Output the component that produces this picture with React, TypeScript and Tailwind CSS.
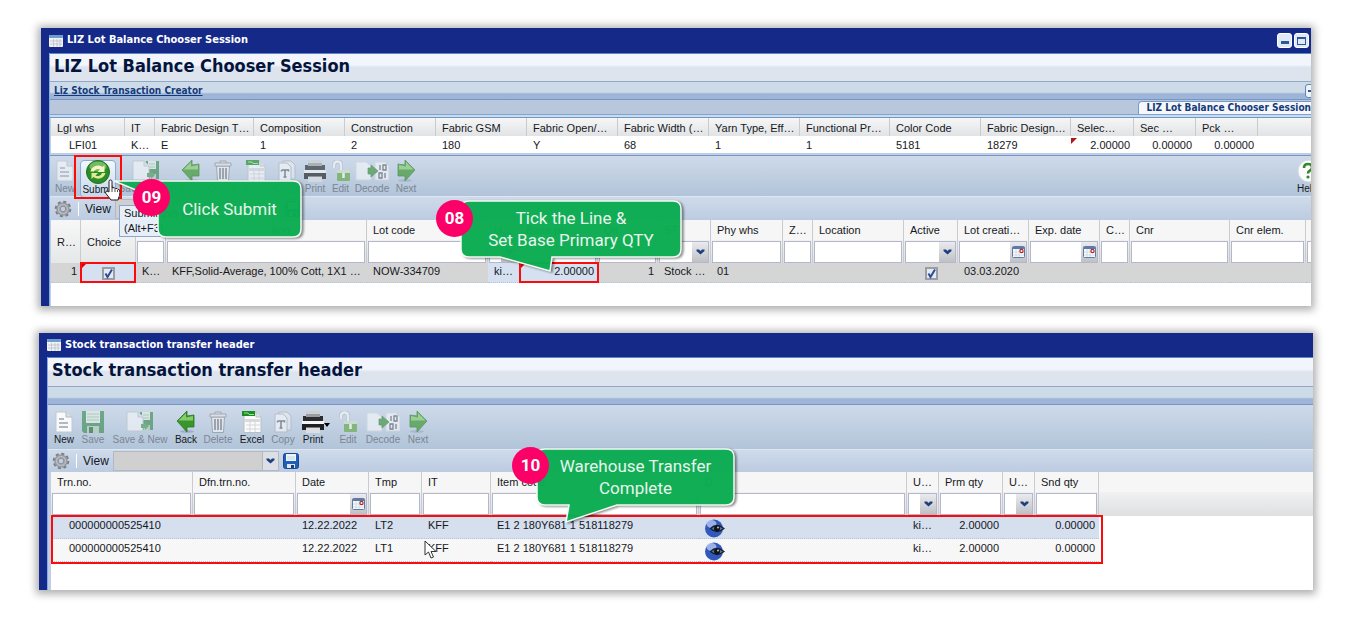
import React from "react";

type Column = {
  label: string;
  width?: string;
  filter?: "text" | "select" | "date" | "none";
  tall?: boolean;
};

const summaryColumns: Column[] = [
  { label: "Lgl whs", width: "w-[74px]" },
  { label: "IT", width: "w-[30px]" },
  { label: "Fabric Design T…", width: "w-[99px]" },
  { label: "Composition", width: "w-[91px]" },
  { label: "Construction", width: "w-[91px]" },
  { label: "Fabric GSM", width: "w-[91px]" },
  { label: "Fabric Open/…", width: "w-[91px]" },
  { label: "Fabric Width (…", width: "w-[91px]" },
  { label: "Yarn Type, Eff…", width: "w-[91px]" },
  { label: "Functional Pr…", width: "w-[90px]" },
  { label: "Color Code", width: "w-[91px]" },
  { label: "Fabric Design…", width: "w-[90px]" },
  { label: "Selec…", width: "w-[63px]" },
  { label: "Sec …", width: "w-[62px]" },
  { label: "Pck …", width: "w-[62px]" },
  { label: "" },
];

const summaryValues = ["LFI01", "K…", "E", "1", "2", "180", "Y", "68", "1", "1", "5181", "18279", "2.00000", "0.00000", "0.00000", ""];

const lotColumns: Column[] = [
  { label: "R…", width: "w-[30px]", tall: true },
  { label: "Choice", width: "w-[55px]", tall: true },
  { label: "IT", width: "w-[30px]", filter: "text" },
  { label: "Summarized description", width: "w-[201px]", filter: "text" },
  { label: "Lot code", width: "w-[121px]", filter: "text" },
  { label: "U…", width: "w-[32px]", filter: "select" },
  { label: "Base pri…", width: "w-[78px]", filter: "text" },
  { label: "Qlt", width: "w-[60px]", filter: "text" },
  { label: "ST", width: "w-[53px]", filter: "select" },
  { label: "Phy whs", width: "w-[72px]", filter: "text" },
  { label: "Z…", width: "w-[30px]", filter: "text" },
  { label: "Location", width: "w-[91px]", filter: "text" },
  { label: "Active", width: "w-[54px]", filter: "select" },
  { label: "Lot creati…", width: "w-[71px]", filter: "date" },
  { label: "Exp. date", width: "w-[71px]", filter: "date" },
  { label: "C…", width: "w-[30px]", filter: "text" },
  { label: "Cnr", width: "w-[100px]", filter: "text" },
  { label: "Cnr elem.", width: "w-[76px]", filter: "text" },
  { label: "", filter: "text" },
];

const transferColumns: Column[] = [
  { label: "Trn.no.", width: "w-[142px]", filter: "text" },
  { label: "Dfn.trn.no.", width: "w-[103px]", filter: "text" },
  { label: "Date", width: "w-[73px]", filter: "date" },
  { label: "Tmp", width: "w-[53px]", filter: "text" },
  { label: "IT", width: "w-[69px]", filter: "text" },
  { label: "Item code", width: "w-[208px]", filter: "text" },
  { label: "D", width: "w-[208px]", filter: "text" },
  { label: "U…", width: "w-[32px]", filter: "select" },
  { label: "Prm qty", width: "w-[64px]", filter: "text" },
  { label: "U…", width: "w-[32px]", filter: "select" },
  { label: "Snd qty", width: "w-[64px]", filter: "text" },
  { label: "", filter: "none" },
];

const transferRows = [
  { number: "000000000525410", date: "12.22.2022", template: "LT2", type: "KFF", item: "E1 2 180Y681 1 518118279", unit: "ki…", primary: "2.00000", secondary: "0.00000" },
  { number: "000000000525410", date: "12.22.2022", template: "LT1", type: "KFF", item: "E1 2 180Y681 1 518118279", unit: "ki…", primary: "2.00000", secondary: "0.00000" },
];

/* ---------- Icons ---------- */

const WindowIcon = () => (
  <svg width="14" height="12" viewBox="0 0 14 12" aria-hidden="true">
    <rect width="14" height="12" rx="1" fill="#f0f2f4" />
    <rect width="14" height="3" rx="1" fill="#6f9bd0" />
    <path d="M1 6h12M1 9h12M4.500 4v8M8 4v8M11 4v8" stroke="#b9c0ca" strokeWidth="0.800" />
  </svg>
);

const NewIcon = () => (
  <svg width="18" height="22" viewBox="0 0 18 22" aria-hidden="true">
    <path d="M1 1h10l6 5v15H1z" fill="#f8f9fa" stroke="#c2c8d0" />
    <path d="M11 1v5h6" fill="#d9dee5" stroke="#b4bcc6" />
    <path d="M4 8h5M4 12h9M4 16h9" stroke="#b3b8bf" strokeWidth="2" />
  </svg>
);

const SaveIcon = () => (
  <svg width="24" height="22" viewBox="0 0 24 22" aria-hidden="true">
    <path d="M1 0h22v22H3l-2-2z" fill="#3f8d57" />
    <path d="M5 0h14v12H5z" fill="#e3eee4" />
    <path d="M6 3h12M6 6h12M6 9h12" stroke="#9fc2a6" />
    <path d="M6 15h12v7H6z" fill="#b4cfba" />
    <path d="M8 16h4v6H8z" fill="#2b6d40" />
  </svg>
);

const SaveNewIcon = () => (
  <svg width="28" height="22" viewBox="0 0 28 22" aria-hidden="true">
    <path d="M14 1h13v18H14z" fill="#3f8d57" />
    <path d="M16 1h8v8h-8z" fill="#e3eee4" />
    <path d="M17 4h6M17 7h6" stroke="#9fc2a6" />
    <path d="M18 14h6v5h-6z" fill="#b4cfba" />
    <path d="M1 1h11l5 5v14H1z" fill="#f4f6f8" stroke="#bcc4ce" />
    <path d="M12 1v5h5" fill="#dde2e8" stroke="#bcc4ce" />
    <path d="M15 13h4v-2l4 4-4 4v-2h-4z" fill="#4f9d5a" />
  </svg>
);

const ArrowIcon = ({ flip = false }: { flip?: boolean }) => (
  <svg width="20" height="22" viewBox="0 0 20 22" className={flip ? "-scale-x-100" : ""} aria-hidden="true">
    <ellipse cx="11" cy="20.500" rx="7" ry="1.500" fill="#8fa2b5" opacity="0.700" />
    <path d="M1 10 11 0v5l7-1v12h-7v5z" fill="#38962a" stroke="#2a7522" strokeWidth="0.800" />
    <path d="M2.500 9.500 10 2v4.500L17 5v4.500z" fill="#86cb6c" />
  </svg>
);

const TrashIcon = () => (
  <svg width="18" height="22" viewBox="0 0 18 22" aria-hidden="true">
    <path d="M2.500 6h13l-1 15.500h-11z" fill="#f1f2f3" stroke="#8b9097" />
    <path d="M1 3h16v3H1zM6 3V1h6v2" fill="#e4e6e8" stroke="#8b9097" />
    <path d="M6 8v11M9 8v11M12 8v11" stroke="#6d737b" strokeWidth="1.600" />
  </svg>
);

const ExcelIcon = () => (
  <svg width="20" height="22" viewBox="0 0 20 22" aria-hidden="true">
    <path d="M2 1h12l5 5v15.500H2z" fill="#fbfbfb" stroke="#b9bec4" />
    <path d="M0 0h13v5H0z" fill="#1c8d25" />
    <path d="M2 2h4l1 1.500h5" stroke="#9ddc9c" fill="none" />
    <path d="M14 1v5h5" fill="#e4e7ea" stroke="#b9bec4" />
    <path d="M3 8h15v3H3z" fill="#d8dadd" />
    <path d="M4 14h14M4 18h14M8 8v13M13 8v13" stroke="#d3d6da" />
  </svg>
);

const CopyIcon = () => (
  <svg width="20" height="22" viewBox="0 0 20 22" aria-hidden="true">
    <path d="M6 1h8l4 4v14H6z" fill="#e8ebef" stroke="#aab2bc" />
    <path d="M2 3h8l4 4v14H2z" fill="#f7f8f9" stroke="#aab2bc" />
    <path d="M4.500 10h7v1.500M4.500 10v1.500M8 10v7M6.500 17h3" stroke="#5b626c" strokeWidth="1.500" fill="none" />
  </svg>
);

const PrintIcon = () => (
  <svg width="22" height="22" viewBox="0 0 22 22" aria-hidden="true">
    <path d="M4 0h14v5H4z" fill="#cdd0d3" />
    <path d="M1 5h20v5H1z" fill="#2b2d30" />
    <path d="M4 3h14v3H4z" fill="#9a9da1" />
    <path d="M0 10h22v3H0z" fill="#f4f5f6" />
    <path d="M0 13h22v6H0z" fill="#1d1f21" />
    <path d="M4 16h14v6H4z" fill="#dcdfe1" />
    <path d="M4 16.500h14" stroke="#777" />
  </svg>
);

const LockIcon = () => (
  <svg width="20" height="22" viewBox="0 0 20 22" aria-hidden="true">
    <path d="M3 8V5q0-3.500 3.500-3.500T10 5v6" fill="none" stroke="#a9b3be" strokeWidth="4" />
    <path d="M3 8V5q0-3.500 3.500-3.500T10 5v6" fill="none" stroke="#f3f5f7" strokeWidth="2.600" />
    <rect x="6" y="10" width="13" height="11" rx="1" fill="#65a848" />
    <rect x="6" y="10" width="13" height="3" fill="#cfe3c5" />
    <path d="M12.500 13v5" stroke="#f6fbf4" strokeWidth="2.500" />
  </svg>
);

const DecodeIcon = () => (
  <svg width="34" height="22" viewBox="0 0 34 22" aria-hidden="true">
    <path d="M1 2h10l5 4v14H1z" fill="#f4f6f8" stroke="#d2d8df" />
    <path d="M20 2h10l4 4v14H20z" fill="#f4f6f8" stroke="#d2d8df" />
    <path d="M13 8h3V5l7 6-7 6v-3h-3z" fill="#3f943d" stroke="#347a35" strokeWidth="0.700" />
    <path d="M25 5v5M28 5h3v5h-3zM24 13h3v5h-3zM30 13v5" stroke="#565d66" fill="none" strokeWidth="1.300" />
  </svg>
);

const SubmitIcon = () => (
  <svg width="24" height="24" viewBox="0 0 24 24" aria-hidden="true">
    <circle cx="12" cy="12" r="11.500" fill="#2c8c25" stroke="#247020" />
    <ellipse cx="12" cy="6.500" rx="8.500" ry="5" fill="#8fcf79" opacity="0.700" />
    <path d="M4.500 11.500a7.500 7.500 0 0 1 12-4.500l2-2v7h-7l2.500-2.500A4.500 4.500 0 0 0 8 11.500z" fill="#f7f3c4" />
    <path d="M19.500 13a7.500 7.500 0 0 1-12 4l-2 2v-6h6.500l-2.500 2.500a4.500 4.500 0 0 0 6.500-2.500z" fill="#dcea9a" />
  </svg>
);

const HelpIcon = () => (
  <svg width="24" height="24" viewBox="0 0 24 24" aria-hidden="true">
    <circle cx="12" cy="12" r="11" fill="#fafbfa" stroke="#d3dae2" />
    <path d="M7 9q0-4 4-4t4 3.500q0 2-2 3t-2 3" fill="none" stroke="#36862f" strokeWidth="2.600" />
    <circle cx="11" cy="18" r="1.600" fill="#36862f" />
  </svg>
);

const GearIcon = () => (
  <svg width="18" height="18" viewBox="0 0 18 18" aria-hidden="true">
    <circle cx="9" cy="9" r="7" fill="none" stroke="#797d82" strokeWidth="2.600" strokeDasharray="3 2.500" />
    <circle cx="9" cy="9" r="5" fill="none" stroke="#96999e" strokeWidth="3.600" />
    <circle cx="9" cy="9" r="4.500" fill="none" stroke="#b9bcc0" strokeWidth="1.500" />
    <circle cx="9" cy="9" r="2.800" fill="#c4cfde" stroke="#777b80" strokeWidth="0.800" />
  </svg>
);

const DiskIcon = () => (
  <svg width="16" height="16" viewBox="0 0 16 16" aria-hidden="true">
    <rect x="0.500" y="0.500" width="15" height="15" rx="2" fill="#1f5fb4" stroke="#174a91" />
    <path d="M3 1h10v7H3z" fill="#eef4fa" />
    <path d="M4 4h8M4 6h8" stroke="#b9cde4" strokeWidth="0.800" />
    <path d="M4 11h8v4H4z" fill="#dfe7f0" />
    <path d="M8 12h3v3H8z" fill="#1b427c" />
  </svg>
);

const Chevron = () => (
  <svg width="9" height="6" viewBox="0 0 9 6" aria-hidden="true">
    <path d="M0.500 0.500h2.500L4.500 2 6 0.500h2.500v1.500L4.500 5.500 0.500 2z" fill="#1d3f80" />
  </svg>
);

const CalendarIcon = () => (
  <svg width="13" height="12" viewBox="0 0 13 12" aria-hidden="true">
    <rect x="0.500" y="0.500" width="12" height="11" rx="1" fill="#f8fafc" stroke="#5d7ba4" />
    <path d="M0.500 1h12v2H0.500z" fill="#5d7ba4" />
    <path d="M1 6h11M1 9h11M4 3v8M7 3v8" stroke="#ccd6e2" strokeWidth="0.800" />
    <circle cx="9.500" cy="5" r="1.600" fill="#fff" stroke="#b32626" strokeWidth="1.200" />
  </svg>
);

const EyeIcon = () => (
  <svg width="20" height="19" viewBox="0 0 20 19" aria-hidden="true">
    <circle cx="9" cy="9.500" r="9" fill="#3158bd" />
    <ellipse cx="6.500" cy="5" rx="5" ry="4" fill="#b7c9f2" opacity="0.800" />
    <path d="M5.500 9.500q6-6 13.500 0-7 6-13.500 0z" fill="#5f718f" stroke="#16202f" strokeWidth="1.200" />
    <circle cx="12" cy="9.500" r="3" fill="#10151e" />
    <circle cx="13" cy="8.500" r="0.900" fill="#c7d5e6" />
  </svg>
);

const ArrowCursor = () => (
  <svg width="13" height="19" viewBox="0 0 13 19" aria-hidden="true">
    <path d="M1 1v14l3.500-3 2.500 6 2.500-1-2.500-5.500H12z" fill="#fff" stroke="#333" />
  </svg>
);

const HandCursor = () => (
  <svg width="17" height="22" viewBox="0 0 17 22" aria-hidden="true">
    <path d="M5 13V2.500a1.500 1.500 0 0 1 3 0V9l1-.5 1.500.5 1 .5 1.500 0 .8.800 1.700.5q.8 3 0 5.500L14 21H7l-5.500-7q0-2 1.500-2z" fill="#fff" stroke="#222" />
    <path d="M8 9v4M11 10v3M13.500 11v2" stroke="#222" strokeWidth="0.800" />
  </svg>
);

/* ---------- Toolbar ---------- */

type Tool = { label: string; icon: React.ReactNode; width: string; enabled?: boolean; menu?: boolean };

const lotTools: Tool[] = [
  { label: "New", icon: <NewIcon />, width: "w-[30px]" },
  { label: "Submit", icon: <SubmitIcon />, width: "w-[36px]", enabled: true },
  { label: "Save & New", icon: <SaveNewIcon />, width: "w-[60px]" },
  { label: "Back", icon: <ArrowIcon />, width: "w-[30px]" },
  { label: "Delete", icon: <TrashIcon />, width: "w-[34px]" },
  { label: "Excel", icon: <ExcelIcon />, width: "w-[31px]" },
  { label: "Copy", icon: <CopyIcon />, width: "w-[31px]" },
  { label: "Print", icon: <PrintIcon />, width: "w-[26px]" },
  { label: "Edit", icon: <LockIcon />, width: "w-[25px]" },
  { label: "Decode", icon: <DecodeIcon />, width: "w-[38px]" },
  { label: "Next", icon: <ArrowIcon flip />, width: "w-[30px]" },
];

const transferTools: Tool[] = [
  { label: "New", icon: <NewIcon />, width: "w-[28px]", enabled: true },
  { label: "Save", icon: <SaveIcon />, width: "w-[30px]" },
  { label: "Save & New", icon: <SaveNewIcon />, width: "w-[64px]" },
  { label: "Back", icon: <ArrowIcon />, width: "w-[28px]", enabled: true },
  { label: "Delete", icon: <TrashIcon />, width: "w-[36px]" },
  { label: "Excel", icon: <ExcelIcon />, width: "w-[32px]", enabled: true },
  { label: "Copy", icon: <CopyIcon />, width: "w-[30px]" },
  { label: "Print", icon: <PrintIcon />, width: "w-[30px]", enabled: true, menu: true },
  { label: "Edit", icon: <LockIcon />, width: "w-[40px]" },
  { label: "Decode", icon: <DecodeIcon />, width: "w-[30px]" },
  { label: "Next", icon: <ArrowIcon flip />, width: "w-[40px]" },
];

const ToolButton = ({ tool }: { tool: Tool }) => (
  <button
    type="button"
    disabled={!tool.enabled}
    className={`relative flex shrink-0 flex-col items-center ${tool.width} ${tool.label === "Submit" ? "rounded-sm border border-[#8fabd0] bg-linear-to-b from-[#f2f7fc] to-[#c5d8ec]" : ""}`}
  >
    <span className={`flex h-[22px] items-center ${tool.enabled ? "" : "opacity-65"}`}>{tool.icon}</span>
    <span className={`text-[10px] leading-[14px] whitespace-nowrap ${tool.enabled ? "text-[#15181d]" : "text-[#7a8594]"}`}>
      {tool.label}
    </span>
    {tool.menu && <span className="absolute top-3 -right-0.5 border-x-[3px] border-t-4 border-x-transparent border-t-black"></span>}
  </button>
);

const ViewBar = ({ id, height }: { id: string; height: string }) => (
  <div className={`flex items-center border-t border-[#dce7f3] bg-linear-to-b from-[#cfdbeb] to-[#bccbe1] pl-1 ${height}`}>
    <button type="button" aria-label="Settings" className="mr-1.5">
      <GearIcon />
    </button>
    <span className="mr-1.5 h-3.5 w-px bg-white"></span>
    <label htmlFor={id} className="w-[30px] text-[12px] leading-4 text-[#15181d]">View</label>
    <span className="relative flex">
      <select id={id} className="h-5 w-[166px] appearance-none border border-[#b3b9c3] bg-[#d0d0d0] text-[11px]"></select>
      <span className="pointer-events-none absolute top-px right-px flex h-[18px] w-4 items-center justify-center border-l border-[#b3b9c3] bg-[#dcdfe4]">
        <Chevron />
      </span>
    </span>
    <button type="button" aria-label="Save view" className="ml-1">
      <DiskIcon />
    </button>
  </div>
);

/* ---------- Grid ---------- */

const Filter = ({ column }: { column: Column }) => {
  if (column.filter === "none") return null;
  const name = `Filter ${column.label}`;
  return (
    <div className="flex h-[22px] border border-[#b2b7cd] bg-white">
      {column.filter === "select" ? (
        <span className="relative flex w-full">
          <select aria-label={name} className="w-full appearance-none bg-white text-[11px]"></select>
          <span className="pointer-events-none absolute inset-y-0 right-0 flex w-4 items-center justify-center bg-linear-to-b from-[#e9ebee] to-[#bfc1c4]">
            <Chevron />
          </span>
        </span>
      ) : (
        <input type="text" aria-label={name} className="w-full min-w-0 bg-white px-1 text-[11px] outline-none" />
      )}
      {column.filter === "date" && (
        <button type="button" aria-label={`Pick ${column.label}`} className="flex w-4 shrink-0 items-center justify-center bg-linear-to-b from-[#e9ebee] to-[#bfc1c4]">
          <CalendarIcon />
        </button>
      )}
    </div>
  );
};

const FilterHead = ({ columns, filterHeight }: { columns: Column[]; filterHeight: string }) => (
  <thead>
    <tr className="h-5 bg-[#f6f6f6]">
      {columns.map((column, index) => (
        <th
          key={index}
          rowSpan={column.tall ? 2 : 1}
          className={`overflow-hidden border-r border-[#c9cbce] p-0 pl-1.5 text-left font-normal whitespace-nowrap last:border-r-0 ${column.width ?? ""} ${column.tall ? "bg-linear-to-b from-[#f7f7f7] to-[#e6e7e8]" : ""}`}
        >
          {column.label}
        </th>
      ))}
    </tr>
    <tr className={`bg-linear-to-b from-[#f1f1f2] to-[#dddfe1] ${filterHeight}`}>
      {columns
        .filter((column) => !column.tall)
        .map((column, index) => (
          <td key={index} className="border-r border-[#c9cbce] p-0 px-px last:border-r-0">
            <Filter column={column} />
          </td>
        ))}
    </tr>
  </thead>
);

const Tick = ({ label }: { label: string }) => (
  <label className="relative inline-flex align-top">
    <input type="checkbox" defaultChecked aria-label={label} className="peer h-[13px] w-[13px] appearance-none border-2 border-[#9a9da3] bg-[#e3eaf3]" />
    <svg width="13" height="13" viewBox="0 0 13 13" className="pointer-events-none absolute inset-0 hidden peer-checked:block" aria-hidden="true">
      <path d="m3.500 6.500 2 3.500 4.500-7.500" fill="none" stroke="#2f4b96" strokeWidth="2" />
    </svg>
  </label>
);

/* ---------- Annotations ---------- */

const Badge = ({ value, place }: { value: string; place: string }) => (
  <span className={`absolute z-20 flex h-[37px] w-[37px] items-center justify-center rounded-full bg-[#fb0168] font-[Roboto,sans-serif] text-[17px] leading-none font-bold text-white ${place}`}>
    {value}
  </span>
);

const Callout = ({ place, path, children }: { place: string; path: string; children: React.ReactNode }) => (
  <div className={`absolute z-10 flex h-14 items-center justify-center text-center font-[Roboto,sans-serif] text-[17px] leading-[22px] text-[#e9f5ec] ${place}`}>
    <svg className="absolute inset-0 h-full w-full overflow-visible drop-shadow-[2px_1px_1px_rgba(0,0,0,0.45)]" aria-hidden="true">
      <path d={path} fill="#0baf53" fillOpacity="0.960" stroke="#f4fbf6" strokeWidth="1.500" />
    </svg>
    <p className="relative">{children}</p>
  </div>
);

/* ---------- Windows ---------- */

const TitleBar = ({ title, controls, height }: { title: string; controls?: boolean; height: string }) => (
  <div className={`flex items-center bg-[#152989] font-['DejaVu_Sans_Condensed','DejaVu_Sans',sans-serif] ${height}`}>
    <WindowIcon />
    <span className="ml-1 flex-1 text-[11px] font-bold whitespace-nowrap text-white">{title}</span>
    {controls && (
      <span className="mr-0.5 flex gap-0.5">
        <button type="button" aria-label="Minimize" className="flex h-[15px] w-[15px] items-end justify-center rounded-[3px] border border-white bg-[#dfe9f6] pb-[3px]">
          <span className="h-[3px] w-2 bg-[#2d5796]"></span>
        </button>
        <button type="button" aria-label="Maximize" className="flex h-[15px] w-[15px] items-center justify-center rounded-[3px] border border-white bg-[#dfe9f6]">
          <span className="h-2 w-[9px] border border-t-2 border-[#2d5796]"></span>
        </button>
      </span>
    )}
  </div>
);

const Heading = ({ height, children }: { height: string; children: React.ReactNode }) => (
  <h1 className={`border-t border-[#5d86c4] bg-linear-to-b from-[#f2f5fc] from-40% to-[#dde4ee] to-50% pl-1 font-['DejaVu_Sans_Condensed','DejaVu_Sans',sans-serif] text-[18px] leading-6 font-bold whitespace-nowrap text-[#05143c] ${height}`}>
    {children}
  </h1>
);

const LotBalanceWindow: React.FC = () => (
  <section className="relative mr-[58px] ml-[41px] overflow-visible bg-[#152989] pl-2 shadow-[0_1px_8px_3px_rgba(0,0,0,0.32)]">
    <TitleBar title="LIZ Lot Balance Chooser Session" controls height="h-[25px]" />
    <div className="overflow-hidden border-l border-[#82aee0] bg-[#bfcee2]">
      <Heading height="h-7">LIZ Lot Balance Chooser Session</Heading>
      <div className="flex h-[19px] items-center justify-between border-y border-t-[#8fa9c7] border-b-[#7396c8] bg-linear-to-b from-[#cddbe9] from-60% to-[#9fb5d7] to-70% pl-1 font-['DejaVu_Sans_Condensed','DejaVu_Sans',sans-serif]">
        <a href="#creator" className="text-[10px] font-bold whitespace-nowrap text-[#143a7b] underline">Liz Stock Transaction Creator</a>
        <button type="button" aria-label="Collapse" className="-mr-2 flex h-3.5 w-3.5 items-center rounded-[3px] border border-[#6285b8] bg-[#edf3fa] pl-0.5">
          <span className="h-0.5 w-2 bg-[#315b9b]"></span>
        </button>
      </div>
      <div className="flex h-[15px] items-end justify-end border-b border-[#82a1cc] bg-[#b9c7dd]">
        <a href="#chooser" className="h-[13px] rounded-tl-sm border-t border-l border-[#7899c6] bg-[#f4f7fb] pl-2 font-['DejaVu_Sans_Condensed','DejaVu_Sans',sans-serif] text-[10px] leading-3 font-bold whitespace-nowrap text-[#143a7b]">
          LIZ Lot Balance Chooser Session
        </a>
      </div>
      <div className="h-[3px] border-b border-[#7396c8] bg-[#c8dcf0]"></div>

      <table className="ml-px w-full table-fixed border-separate border-spacing-0 bg-white leading-4">
        <thead>
          <tr className="h-[18px] bg-linear-to-b from-[#f6f6f6] to-[#e1e3e5]">
            {summaryColumns.map((column, index) => (
              <th key={index} className={`overflow-hidden border-r border-[#c9cbce] p-0 pt-px pl-1.5 text-left font-normal whitespace-nowrap last:border-r-0 ${column.width ?? ""}`}>
                {column.label}
              </th>
            ))}
          </tr>
        </thead>
        <tbody>
          <tr className="h-[17px]">
            {summaryValues.map((value, index) => (
              <td key={index} className={`relative p-0 whitespace-nowrap ${index > 11 ? "pr-1 text-right" : index === 0 ? "pl-[18px]" : "pl-1.5"}`}>
                {index === 12 && <span className="absolute top-0.5 left-0 border-t-[6px] border-r-[6px] border-t-[#b41414] border-r-transparent"></span>}
                {value}
              </td>
            ))}
          </tr>
        </tbody>
      </table>

      {/* Toolbar */}
      <div className="mt-0.5 flex h-[41px] items-start justify-between border-t border-[#7396c8] bg-linear-to-b from-[#cedaea] to-[#b2c4d9]">
        <div className="flex pt-1">
          {lotTools.map((tool) => (
            <ToolButton key={tool.label} tool={tool} />
          ))}
        </div>
        <button type="button" className="-mr-2.5 flex w-6 shrink-0 flex-col items-start pt-1 text-[10px] leading-[14px]">
          <span className="flex h-[22px] items-center"><HelpIcon /></span>
          Help
        </button>
      </div>
      <ViewBar id="lot-view" height="h-6" />

      <table className="ml-px w-full table-fixed border-separate border-spacing-0 bg-white leading-4">
        <FilterHead columns={lotColumns} filterHeight="h-[23px]" />
        <tbody>
          <tr className="h-5 bg-[#d5d5d5] align-top [&>td]:border-b [&>td]:border-dotted [&>td]:border-[#b4c6df] [&>td]:p-0 [&>td]:pl-1.5 [&>td]:whitespace-nowrap">
            <td><span className="block pr-1 text-right">1</span></td>
            <td className="relative bg-[#d5e0f0]">
              <span className="absolute -top-px left-0 border-t-[7px] border-r-[7px] border-t-[#e00000] border-r-transparent"></span>
              <span className="absolute -inset-px right-0 border-2 border-[#fb0b0b]"></span>
              <span className="flex justify-center pt-1 pr-1.5"><Tick label="Choice" /></span>
            </td>
            <td>K…</td>
            <td>KFF,Solid-Average, 100% Cott, 1X1 …</td>
            <td>NOW-334709</td>
            <td className="bg-[#d5e0f0]">ki…</td>
            <td className="relative bg-[#d5e0f0] text-right">
              <span className="absolute -top-px left-0 border-t-[7px] border-r-[7px] border-t-[#e00000] border-r-transparent"></span>
              <span className="absolute -inset-px border-2 border-[#fb0b0b]"></span>
              <span className="pr-1">2.00000</span>
            </td>
            <td className="text-right"><span className="pr-1">1</span></td>
            <td>Stock …</td>
            <td>01</td>
            <td></td>
            <td></td>
            <td><span className="flex justify-center pt-1 pr-1.5"><Tick label="Active" /></span></td>
            <td>03.03.2020</td>
            <td></td>
            <td></td>
            <td></td>
            <td></td>
            <td></td>
          </tr>
        </tbody>
      </table>
      <div className="ml-px h-[23px] bg-white"></div>
    </div>

    {/* Step 09 */}
    <span className="absolute top-[127px] left-[33px] h-11 w-12 border-2 border-[#fb0b0b]"></span>
    <div role="tooltip" className="absolute top-[177px] left-[78px] w-[154px] border border-[#8aa6cf] bg-[#e6eef8] px-1 text-[11px] leading-[15px]">
      Submit this element
      <br />
      (Alt+F3)
    </div>
    <Callout place="top-[153px] left-[117px] w-[143px]" path="M-44 0H135Q143 0 143 8V48Q143 56 135 56H8Q0 56 0 48V18Z">Click Submit</Callout>
    <Badge value="09" place="top-[151px] left-[92px]" />
    <span className="absolute top-[151px] left-[63px] z-20"><HandCursor /></span>

    {/* Step 08 */}
    <Callout place="top-[173px] left-[420px] w-[220px]" path="M8 0H212Q220 0 220 8V48Q220 56 212 56H91L89 70 39 56H8Q0 56 0 48V8Q0 0 8 0Z">
      Tick the Line &amp;
      <br />
      Set Base Primary QTY
    </Callout>
    <Badge value="08" place="top-[172px] left-[395px]" />
  </section>
);

const TransferWindow: React.FC = () => (
  <section className="relative mt-[27px] mr-14 ml-[39px] bg-[#152989] pl-2 shadow-[0_1px_8px_3px_rgba(0,0,0,0.32)]">
    <TitleBar title="Stock transaction transfer header" height="h-6" />
    <div className="overflow-hidden border-l border-[#82aee0] bg-[#bfcee2]">
      <Heading height="h-[29px]">Stock transaction transfer header</Heading>
      <div className="h-[19px] border-y border-t-[#8fa9c7] border-b-[#7396c8] bg-linear-to-b from-[#cddbe9] from-60% to-[#9fb5d7] to-70%"></div>
      <div className="flex h-11 items-start bg-linear-to-b from-[#cedaea] to-[#b2c4d9] pt-1.5 pl-0.5">
        {transferTools.map((tool) => (
          <ToolButton key={tool.label} tool={tool} />
        ))}
      </div>
      <ViewBar id="transfer-view" height="h-[23px]" />

      <div className="relative ml-[3px]">
        <table className="w-full table-fixed border-separate border-spacing-0 bg-white leading-4">
          <FilterHead columns={transferColumns} filterHeight="h-6" />
          <tbody>
            {transferRows.map((row) => (
              <tr key={row.template} className="h-[23px] align-top odd:bg-[#d5dfee] even:bg-[#f7f7f7] [&>td]:border-b [&>td]:border-dotted [&>td]:border-[#b4c6df] [&>td]:p-0 [&>td]:pt-px [&>td]:pl-1.5 [&>td]:whitespace-nowrap">
                <td><span className="pl-3">{row.number}</span></td>
                <td></td>
                <td>{row.date}</td>
                <td>{row.template}</td>
                <td>{row.type}</td>
                <td>{row.item}</td>
                <td>
                  <button type="button" aria-label="Show details" className="block pt-0.5"><EyeIcon /></button>
                </td>
                <td>{row.unit}</td>
                <td className="text-right"><span className="pr-1">{row.primary}</span></td>
                <td></td>
                <td className="text-right"><span className="pr-1">{row.secondary}</span></td>
                <td className="border-b-0! bg-white"></td>
              </tr>
            ))}
          </tbody>
        </table>
        <span className="absolute -bottom-0.5 left-0 h-[49px] w-[1052px] border-2 border-[#fb0b0b]"></span>
      </div>
      <div className="ml-[3px] h-7 bg-white"></div>
    </div>

    {/* Step 10 */}
    <Callout place="top-[116px] left-[498px] w-[197px]" path="M8 0H189Q197 0 197 8V48Q197 56 189 56H80L29 73 32 56H8Q0 56 0 48V8Q0 0 8 0Z">
      Warehouse Transfer
      <br />
      Complete
    </Callout>
    <Badge value="10" place="top-[114px] left-[473px]" />
    <span className="absolute top-[207px] left-[385px]"><ArrowCursor /></span>
  </section>
);

const App: React.FC = () => {
  return (
    <main className="min-h-screen overflow-hidden bg-white pt-7 pb-8 font-['Liberation_Sans',Arial,sans-serif] text-[11px] text-[#15181d]">
      <LotBalanceWindow />
      <TransferWindow />
    </main>
  );
};

export default App;
